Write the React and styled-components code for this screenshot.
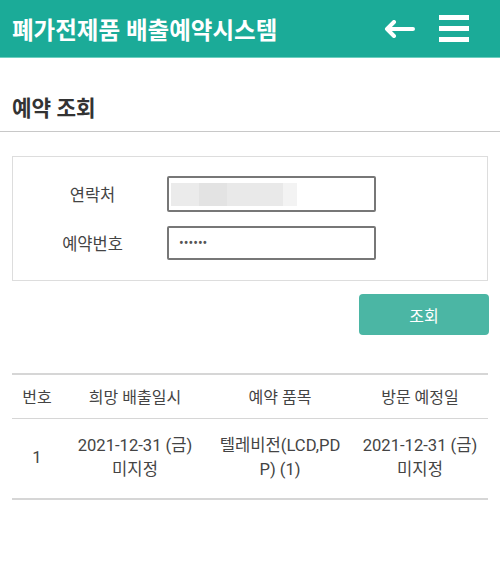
import React from "react";
import styled, { createGlobalStyle } from "styled-components";

const Global = createGlobalStyle`
  html, body { margin: 0; padding: 0; background: #fff; }
  body { font-family: Roboto, "Noto Sans CJK KR", sans-serif; color: #333; }
  * { box-sizing: border-box; }
`;

const Header = styled.header`
  height: 58px;
  background: #1bab98;
  border-bottom: 1px solid #6dcfbf;
  display: flex;
  align-items: center;
  padding: 0 31px 0 12px;
`;

const Brand = styled.h1`
  flex: 1;
  margin: 0;
  color: #fff;
  font-size: 23.5px;
  font-weight: 700;
  font-family: Roboto, "Noto Sans CJK KR", sans-serif;
`;

const IconBtn = styled.span`
  display: flex;
  align-items: center;
  margin-left: ${(p) => p.$gap || 0}px;
`;

const PageTitle = styled.h2`
  margin: 0;
  padding: 33px 12px 4px;
  font-size: 21.3px;
  font-weight: 700;
  color: #333;
  border-bottom: 1px solid #c8c8c8;
  line-height: 36px;
`;

const Body = styled.main`
  padding: 24px 12px 0;
`;

const FormBox = styled.section`
  border: 1px solid #dddddd;
  padding: 19px 0 20px;
  display: flex;
  flex-direction: column;
  gap: 14px;
`;

const FieldRow = styled.div`
  display: grid;
  grid-template-columns: 154px 209px;
  align-items: center;
`;

const Label = styled.label`
  text-align: center;
  padding-left: 5px;
  font-size: 16.5px;
  color: #444;
`;

const InputBox = styled.div`
  height: ${(p) => p.$h}px;
  border: 2px solid #777;
  border-radius: 2px;
  display: flex;
  align-items: center;
  padding: 0 2px;
`;

const Blur = styled.span`
  display: block;
  height: 23px;
  width: ${(p) => p.$w}px;
  background: ${(p) => p.$c};
`;

const Dots = styled.span`
  font-size: 14px;
  color: #555;
  padding-left: 8px;
  line-height: 1;
`;

const ActionRow = styled.div`
  display: flex;
  justify-content: flex-end;
  padding: 13px 0 0;
  margin-right: -1px;
`;

const Button = styled.button`
  width: 130px;
  height: 41px;
  border: none;
  border-radius: 4px;
  background: #4bb6a4;
  color: #fff;
  font-size: 16px;
  font-family: inherit;
`;

const Table = styled.table`
  margin-top: 38px;
  width: 100%;
  border-collapse: collapse;
  border-top: 2px solid #d6d6d6;
  border-bottom: 2px solid #d6d6d6;
  table-layout: fixed;
`;

const Th = styled.th`
  font-weight: 400;
  font-size: 16px;
  color: #444;
  height: 44px;
  border-bottom: 1px solid #d6d6d6;
  width: ${(p) => p.$w}px;
  padding: 0;
`;

const Td = styled.td`
  font-size: 16.6px;
  color: #444;
  text-align: center;
  line-height: 24px;
  height: 81px;
  padding: 0 ${(p) => p.$pad || 0}px;
  word-break: break-all;
`;

function BackArrow() {
  return (
    <svg width="31" height="18" viewBox="0 0 31 18">
      <path d="M29 9H3M10 2L3 9l7 7" stroke="#fff" strokeWidth="4" fill="none" strokeLinecap="round" strokeLinejoin="round" />
    </svg>
  );
}

function Hamburger() {
  return (
    <svg width="30" height="27" viewBox="0 0 30 27">
      <rect x="0" y="0" width="30" height="5" fill="#fff" />
      <rect x="0" y="11" width="30" height="5" fill="#fff" />
      <rect x="0" y="22" width="30" height="5" fill="#fff" />
    </svg>
  );
}

export default function App() {
  return (
    <>
      <Global />
      <Header>
        <Brand>폐가전제품 배출예약시스템</Brand>
        <IconBtn><BackArrow /></IconBtn>
        <IconBtn $gap={24}><Hamburger /></IconBtn>
      </Header>
      <PageTitle>예약 조회</PageTitle>
      <Body>
        <FormBox>
          <FieldRow>
            <Label>연락처</Label>
            <InputBox $h={36}>
              <Blur $w={28} $c="#ebebeb" />
              <Blur $w={28} $c="#e3e3e3" />
              <Blur $w={56} $c="#e9e9e9" />
              <Blur $w={14} $c="#f3f3f3" />
            </InputBox>
          </FieldRow>
          <FieldRow>
            <Label>예약번호</Label>
            <InputBox $h={34}>
              <Dots>••••••</Dots>
            </InputBox>
          </FieldRow>
        </FormBox>
        <ActionRow>
          <Button>조회</Button>
        </ActionRow>
        <Table>
          <thead>
            <tr>
              <Th $w={50}>번호</Th>
              <Th $w={146}>희망 배출일시</Th>
              <Th $w={144}>예약 품목</Th>
              <Th>방문 예정일</Th>
            </tr>
          </thead>
          <tbody>
            <tr>
              <Td>1</Td>
              <Td>2021-12-31 (금)<br />미지정</Td>
              <Td $pad={7}>텔레비전(LCD,PDP) (1)</Td>
              <Td>2021-12-31 (금)<br />미지정</Td>
            </tr>
          </tbody>
        </Table>
      </Body>
    </>
  );
}
